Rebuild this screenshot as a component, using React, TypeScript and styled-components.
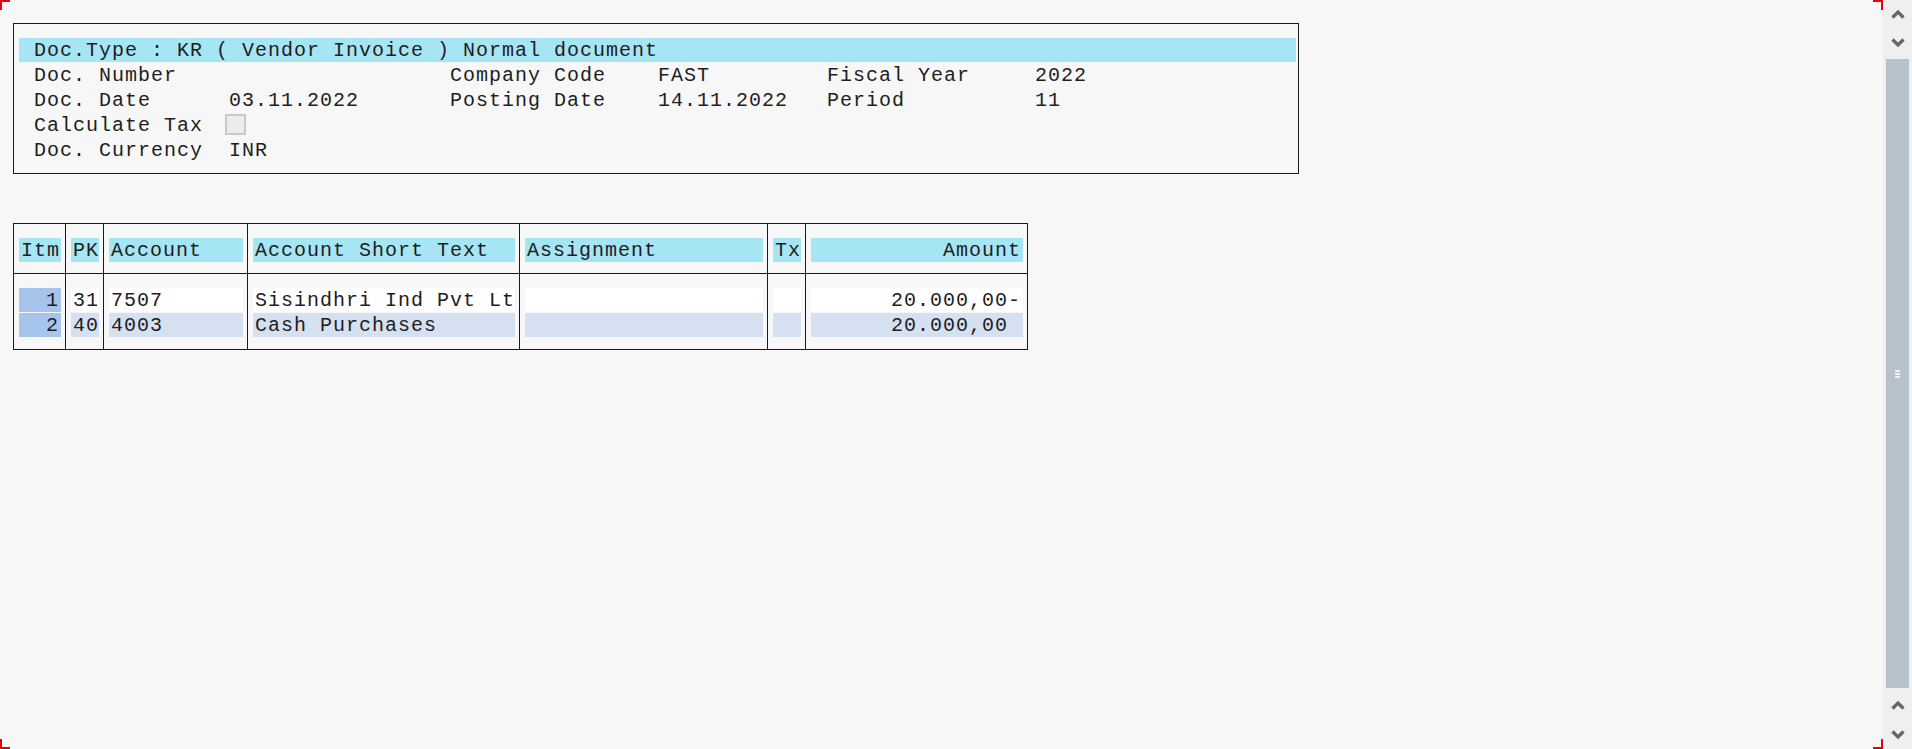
import React from "react";
import styled, { createGlobalStyle } from "styled-components";

const Global = createGlobalStyle`
  html, body {
    margin: 0;
    padding: 0;
    background: #f7f7f7;
  }
  body {
    font-family: "Liberation Mono", monospace;
    color: #1e1e1e;
    overflow: hidden;
  }
`;

const CYAN = "#a6e5f3";
const ITEM_BLUE = "#a6c4ec";
const ROW_BLUE = "#d5e0f0";

const Screen = styled.div`
  display: flex;
  width: 100vw;
  height: 100vh;
  background: #f7f7f7;
`;

const Content = styled.main`
  position: relative;
  flex: 1;
  display: flex;
  flex-direction: column;
  align-items: flex-start;
  gap: 49px;
  padding: 23px 0 0 13px;
  box-sizing: border-box;
  font-size: 20px;
  letter-spacing: 1px;
`;

const Corner = styled.span<{ $v: "top" | "bottom"; $h: "left" | "right" }>`
  position: absolute;
  width: 10px;
  height: 10px;
  box-sizing: border-box;
  ${(p) => p.$v}: 0;
  ${(p) => p.$h}: 0;
  border-${(p) => p.$v}: 2px solid #e3000f;
  border-${(p) => p.$h}: 2px solid #e3000f;
`;

/* ---------- header box ---------- */

const HeaderBox = styled.section`
  width: 1286px;
  box-sizing: border-box;
  border: 1px solid #1a1a1a;
  padding: 14px 2px 11px 5px;
`;

const TitleBar = styled.div`
  height: 24px;
  box-sizing: border-box;
  padding: 1px 0 0 15px;
  line-height: 24px;
  background: ${CYAN};
  white-space: pre;
  overflow: hidden;
`;

const InfoGrid = styled.div`
  display: grid;
  grid-template-columns: 195px 221px 208px 169px 208px 1fr;
  grid-auto-rows: 25px;
  align-items: start;
  padding-left: 15px;
  line-height: 25px;
  white-space: pre;
`;

const Field = styled.span`
  display: block;
  height: 25px;
  box-sizing: border-box;
  padding-top: 1px;
`;

const Checkbox = styled.span`
  display: block;
  width: 21px;
  height: 21px;
  margin: 1px 0 0 -4px;
  box-sizing: border-box;
  border: 2px solid #c9c9c9;
  background: #e9edf0;
`;

/* ---------- items table ---------- */

const Table = styled.div`
  display: grid;
  grid-template-columns: 52px 38px 144px 272px 248px 38px 222px;
  border-top: 1px solid #1a1a1a;
  border-bottom: 1px solid #1a1a1a;
  border-right: 1px solid #1a1a1a;
`;

const HeadCell = styled.div`
  border-left: 1px solid #1a1a1a;
  border-bottom: 1px solid #1a1a1a;
  padding: 14px 4px 11px 5px;
`;

const BodyCell = styled.div`
  border-left: 1px solid #1a1a1a;
  padding: 14px 4px 12px 5px;
  display: flex;
  flex-direction: column;
  gap: 1px;
`;

const Label = styled.div<{ $align: "left" | "right" }>`
  height: 24px;
  box-sizing: border-box;
  padding: 1px 2px 0 2px;
  line-height: 24px;
  background: ${CYAN};
  text-align: ${(p) => p.$align};
  white-space: pre;
  overflow: hidden;
`;

const Value = styled.div<{ $align: "left" | "right"; $bg: string }>`
  height: 24px;
  box-sizing: border-box;
  padding: 1px 2px 0 2px;
  line-height: 24px;
  background: ${(p) => p.$bg};
  text-align: ${(p) => p.$align};
  white-space: pre;
  overflow: hidden;
`;

/* ---------- scrollbar ---------- */

const ScrollBar = styled.aside`
  width: 29px;
  flex: none;
  background: #efefef;
  display: flex;
  flex-direction: column;
`;

const ArrowBtn = styled.div<{ $h: number }>`
  height: ${(p) => p.$h}px;
  display: flex;
  align-items: center;
  justify-content: center;
`;

const Thumb = styled.div`
  flex: 1;
  margin: 3px 3px;
  background: #b6c1cb;
  display: flex;
  flex-direction: column;
  align-items: center;
  justify-content: center;
  gap: 1px;
`;

const Grip = styled.span`
  width: 5px;
  height: 2px;
  background: #eef1f4;
`;

const Chevron: React.FC<{ dir: "up" | "down" }> = ({ dir }) => (
  <svg width="14" height="9" viewBox="0 0 14 9">
    <polyline
      points={dir === "up" ? "1.5,7.5 7,2 12.5,7.5" : "1.5,1.5 7,7 12.5,1.5"}
      fill="none"
      stroke="#666666"
      strokeWidth="3.2"
    />
  </svg>
);

type Col = { title: string; align: "left" | "right"; values: string[] };

const columns: Col[] = [
  { title: "Itm", align: "left", values: ["1", "2"] },
  { title: "PK", align: "left", values: ["31", "40"] },
  { title: "Account", align: "left", values: ["7507", "4003"] },
  { title: "Account Short Text", align: "left", values: ["Sisindhri Ind Pvt Lt", "Cash Purchases"] },
  { title: "Assignment", align: "left", values: ["", ""] },
  { title: "Tx", align: "left", values: ["", ""] },
  { title: "Amount", align: "right", values: ["20.000,00-", "20.000,00 "] },
];

export default function App() {
  return (
    <>
      <Global />
      <Screen>
        <Content>
          <Corner $v="top" $h="left" />
          <Corner $v="top" $h="right" />
          <Corner $v="bottom" $h="left" />
          <Corner $v="bottom" $h="right" />

          <HeaderBox>
            <TitleBar>Doc.Type : KR ( Vendor Invoice ) Normal document</TitleBar>
            <InfoGrid>
              <Field>Doc. Number</Field>
              <Field />
              <Field>Company Code</Field>
              <Field>FAST</Field>
              <Field>Fiscal Year</Field>
              <Field>2022</Field>

              <Field>Doc. Date</Field>
              <Field>03.11.2022</Field>
              <Field>Posting Date</Field>
              <Field>14.11.2022</Field>
              <Field>Period</Field>
              <Field>11</Field>

              <Field>Calculate Tax</Field>
              <Field>
                <Checkbox />
              </Field>
              <Field />
              <Field />
              <Field />
              <Field />

              <Field>Doc. Currency</Field>
              <Field>INR</Field>
            </InfoGrid>
          </HeaderBox>

          <Table>
            {columns.map((c) => (
              <HeadCell key={"h" + c.title}>
                <Label $align={c.align}>{c.title}</Label>
              </HeadCell>
            ))}
            {columns.map((c, ci) => (
              <BodyCell key={"b" + c.title}>
                {c.values.map((v, ri) => (
                  <Value
                    key={ri}
                    $align={ci === 0 ? "right" : c.align}
                    $bg={ci === 0 ? ITEM_BLUE : ri === 0 ? "#ffffff" : ROW_BLUE}
                  >
                    {v}
                  </Value>
                ))}
              </BodyCell>
            ))}
          </Table>
        </Content>

        <ScrollBar>
          <ArrowBtn $h={28}>
            <Chevron dir="up" />
          </ArrowBtn>
          <ArrowBtn $h={28}>
            <Chevron dir="down" />
          </ArrowBtn>
          <Thumb>
            <Grip />
            <Grip />
            <Grip />
          </Thumb>
          <ArrowBtn $h={29}>
            <Chevron dir="up" />
          </ArrowBtn>
          <ArrowBtn $h={29}>
            <Chevron dir="down" />
          </ArrowBtn>
        </ScrollBar>
      </Screen>
    </>
  );
}
